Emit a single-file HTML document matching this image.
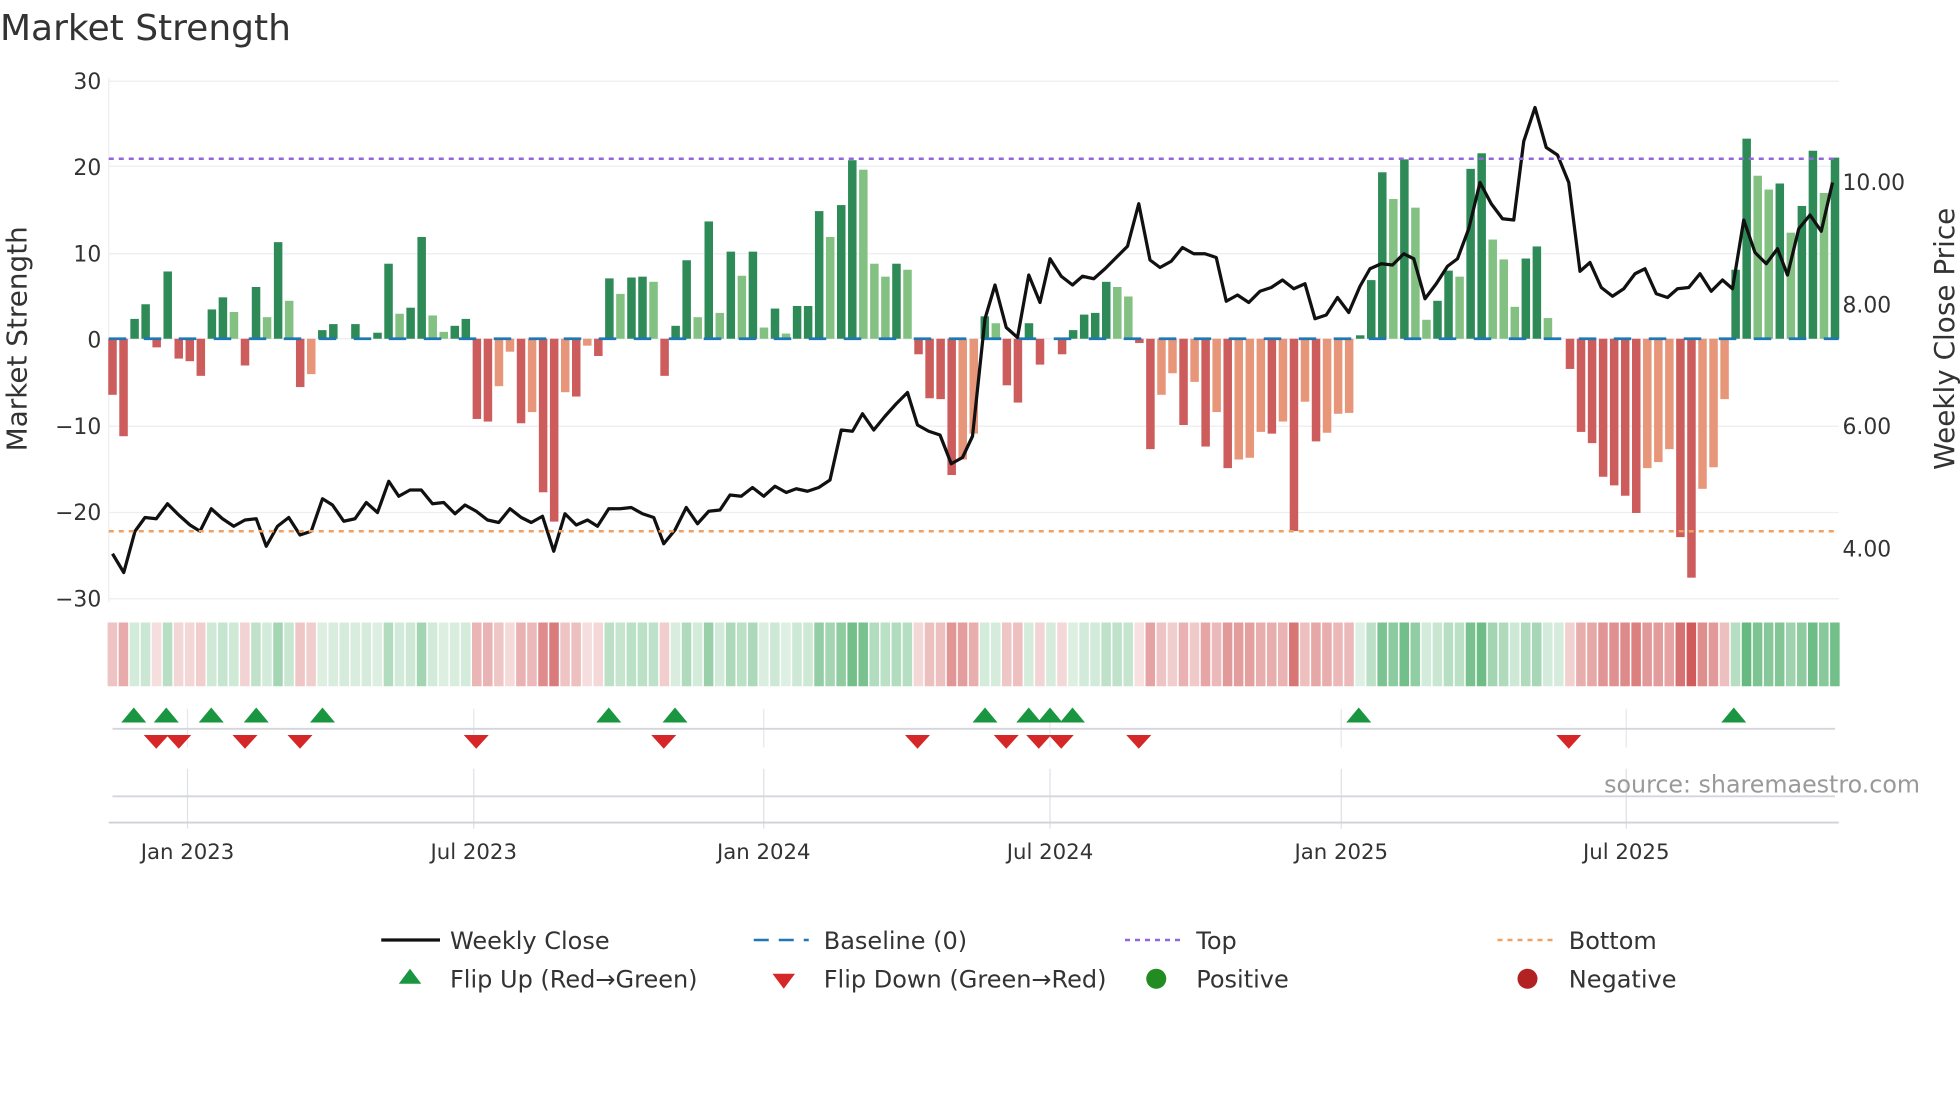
<!DOCTYPE html>
<html><head><meta charset="utf-8"><style>
html,body{margin:0;padding:0;background:#fff;}
svg{display:block;font-family:"DejaVu Sans","Liberation Sans",sans-serif;}
</style></head><body>
<svg id="s" width="1960" height="1102" viewBox="0 0 1568 881.6" xmlns="http://www.w3.org/2000/svg">
<rect width="1568" height="881.6" fill="#fff"/>
<text x="0" y="32" font-size="28.8" fill="#333">Market Strength</text>
<g id="grid"></g>
<g id="bars"></g>
<g id="heat"></g>
<g id="mk"></g>
<polyline id="price" fill="none" stroke="#111" stroke-width="2.6" stroke-linejoin="round"/>
<line x1="87" y1="127" x2="1471" y2="127" stroke="#9467d9" stroke-width="2" stroke-dasharray="4 4"/>
<line x1="87" y1="425" x2="1471" y2="425" stroke="#f0a060" stroke-width="2" stroke-dasharray="4 4"/>
<g font-size="17.5" fill="#333" text-anchor="end">
<text x="81" y="71">30</text><text x="81" y="140">20</text><text x="81" y="209">10</text><text x="81" y="278">0</text>
<text x="81" y="347">−10</text><text x="81" y="416">−20</text><text x="81" y="485">−30</text>
</g>
<g font-size="17.5" fill="#333">
<text x="1474" y="152">10.00</text><text x="1474" y="250">8.00</text><text x="1474" y="347">6.00</text><text x="1474" y="445">4.00</text>
</g>
<text transform="translate(21,271) rotate(-90)" font-size="22.3" fill="#333" text-anchor="middle">Market Strength</text>
<text transform="translate(1563,271) rotate(-90)" font-size="22.3" fill="#333" text-anchor="middle">Weekly Close Price</text>
<text x="1536" y="634" font-size="19" fill="#999" text-anchor="end">source: sharemaestro.com</text>
<g font-size="17" fill="#333" text-anchor="middle">
<text x="150" y="687">Jan 2023</text><text x="379" y="687">Jul 2023</text><text x="611" y="687">Jan 2024</text>
<text x="840" y="687">Jul 2024</text><text x="1073" y="687">Jan 2025</text><text x="1301" y="687">Jul 2025</text>
</g>
<g font-size="19.2" fill="#333">
<line x1="305" y1="752" x2="352" y2="752" stroke="#111" stroke-width="2.6"/><text x="360" y="759">Weekly Close</text>
<line x1="603" y1="752" x2="647" y2="752" stroke="#1f77b4" stroke-width="2" stroke-dasharray="12 8"/><text x="659" y="759">Baseline (0)</text>
<line x1="900" y1="752" x2="945" y2="752" stroke="#9467d9" stroke-width="2" stroke-dasharray="4 4"/><text x="957" y="759">Top</text>
<line x1="1198" y1="752" x2="1243" y2="752" stroke="#f0a060" stroke-width="2" stroke-dasharray="4 4"/><text x="1255" y="759">Bottom</text>
<polygon points="319,787 337,787 328,775" fill="#1a9641"/><text x="360" y="790">Flip Up (Red→Green)</text>
<polygon points="618,779 636,779 627,791" fill="#d62728"/><text x="659" y="790">Flip Down (Green→Red)</text>
<circle cx="925" cy="783" r="8" fill="#228b22"/><text x="957" y="790">Positive</text>
<circle cx="1222" cy="783" r="8" fill="#b22222"/><text x="1255" y="790">Negative</text>
</g>
</svg>
<script>
var NS="http://www.w3.org/2000/svg";
function el(p,t,a){var e=document.createElementNS(NS,t);for(var k in a)e.setAttribute(k,a[k]);p.appendChild(e);return e;}
var grid=document.getElementById('grid');
[65,133,203,271,341,410,479].forEach(function(y){el(grid,'line',{x1:87,x2:1471,y1:y,y2:y,stroke:'#eceef3','stroke-width':1});});
el(grid,'line',{x1:87,x2:87,y1:62,y2:482,stroke:'#eceef3','stroke-width':1});
[150,379,611,840,1073,1301].forEach(function(x){
 el(grid,'line',{x1:x,x2:x,y1:567,y2:598,stroke:'#e6e8ee','stroke-width':1});
 el(grid,'line',{x1:x,x2:x,y1:615,y2:663,stroke:'#dfe1e8','stroke-width':1});
});
el(grid,'line',{x1:90,x2:1468,y1:583,y2:583,stroke:'#d4d6dc','stroke-width':1.5});
el(grid,'line',{x1:90,x2:1468,y1:637,y2:637,stroke:'#d4d6dc','stroke-width':1.5});
el(grid,'line',{x1:87,x2:1471,y1:658,y2:658,stroke:'#d0d2d8','stroke-width':1.5});
var V="-6.5r -11.3r 2.3d 4d -1r 7.8d -2.3r -2.6r -4.3r 3.4d 4.8d 3.1l -3.1r 6d 2.5l 11.2d 4.4l -5.6r -4.1s 1d 1.7d 0d 1.7d 0d 0.7d 8.7d 2.9l 3.6d 11.8d 2.7l 0.8l 1.5d 2.3d -9.3r -9.6r -5.5s -1.5s -9.8r -8.5s -17.8r -21.2r -6.2s -6.7r -0.8s -2r 7d 5.2l 7.1d 7.2d 6.6l -4.3r 1.5d 9.1d 2.5l 13.6d 3l 10.1d 7.3l 10.1d 1.3l 3.5d 0.6l 3.8d 3.8d 14.8d 11.8l 15.5d 20.7d 19.6l 8.7l 7.2l 8.7d 8l -1.8r -6.9r -7r -15.8r -14s -11s 2.6d 1.8l -5.4r -7.4r 1.8d -3r 0d -1.8r 1d 2.8d 3d 6.6d 6l 4.9l -0.5r -12.8r -6.5s -4s -10r -5s -12.5r -8.5s -15r -14s -13.8s -10.8s -11r -9.6s -22.3r -7.3s -11.9r -10.9s -8.7s -8.6s 0.4d 6.8d 19.3d 16.2l 20.8d 15.2l 2.2l 4.4d 7.9d 7.2l 19.7d 21.5d 11.5l 9.2l 3.7l 9.3d 10.7d 2.4l 0d -3.5r -10.8r -12.1r -16r -17r -18.2r -20.2r -15s -14.3s -12.8s -23r -27.7r -17.4s -14.9s -7s 8d 23.2d 18.9l 17.3l 18d 12.3l 15.4d 21.8d 16.9l 21d".split(' ');
var col={d:'#2e8b57',l:'#82c182',r:'#cd5c5c',s:'#e8967a'};
var bars=document.getElementById('bars'),heat=document.getElementById('heat');
var N=V.length,step=(1468-90)/(N-1),w=6.8;
for(var i=0;i<N;i++){
 var v=parseFloat(V[i]),c=V[i].slice(-1),x=90+step*i;
 var y0=271,y1=271-v*6.9;
 if(Math.abs(v)>0.05)el(bars,'rect',{x:x-w/2,y:Math.min(y0,y1),width:w,height:Math.abs(y1-y0),fill:col[c]});
 var a=0.15+Math.min(Math.abs(v),28)/28*0.7;
 var hc=v>=0?'rgba(46,160,80,'+a.toFixed(2)+')':'rgba(200,60,60,'+a.toFixed(2)+')';
 if(v==0)hc='rgba(46,160,80,0.2)';
 el(heat,'rect',{x:x-step/2+0.5,y:498,width:step-1.2,height:51,fill:hc});
}
el(bars,'line',{x1:87,x2:1471,y1:271,y2:271,stroke:'#1f77b4','stroke-width':2.2,'stroke-dasharray':'14 14'});
var mk=document.getElementById('mk');
[107,133,169,205,258,487,540,788,823,840,858,1087,1387].forEach(function(x){el(mk,'polygon',{points:(x-10)+',578 '+(x+10)+',578 '+x+',566',fill:'#1a9641'});});
[125,143,196,240,381,531,734,805,831,849,911,1255].forEach(function(x){el(mk,'polygon',{points:(x-10)+',588 '+(x+10)+',588 '+x+',599',fill:'#d62728'});});
var P=[90,443,99,458,108,425,116,414,125,415,134,403,143,412,152,420,160,425,169,407,178,415,187,421,196,416,205,415,213,437,222,421,231,414,240,428,249,425,258,399,266,404,275,417,284,415,293,402,302,410,311,385,319,397,328,392,337,392,346,403,355,402,364,411,372,404,381,409,390,416,399,418,408,407,417,414,425,418,434,413,443,441,452,411,461,420,470,416,478,421,487,407,496,407,505,406,514,411,523,414,531,435,540,424,549,406,558,419,567,409,576,408,584,396,593,397,602,390,611,397,620,389,629,394,637,391,646,393,655,390,664,384,673,344,682,345,690,331,699,344,708,333,717,323,726,314,734,340,743,345,752,348,761,371,770,366,778,349,788,255,796,228,805,262,814,270,823,220,832,242,840,207,849,221,858,228,866,221,875,223,884,215,893,206,902,197,911,163,920,208,928,214,937,209,946,198,955,203,964,203,973,206,981,241,990,236,999,242,1008,233,1017,230,1026,224,1035,231,1044,227,1052,255,1061,252,1070,238,1079,250,1088,229,1096,215,1105,211,1114,212,1123,203,1131,207,1140,239,1149,227,1158,213,1166,207,1175,183,1184,146,1193,163,1202,175,1211,176,1219,113,1228,86,1237,118,1246,124,1255,146,1264,217,1272,210,1281,230,1290,237,1299,231,1308,219,1316,215,1325,235,1334,238,1342,231,1351,230,1360,219,1369,233,1378,224,1386,231,1395,176,1404,202,1413,211,1422,199,1430,220,1439,183,1448,172,1457,185,1466,146];
var pts=[];for(var j=0;j<P.length;j+=2)pts.push(P[j]+','+P[j+1]);
document.getElementById('price').setAttribute('points',pts.join(' '));
</script>
</body></html>
